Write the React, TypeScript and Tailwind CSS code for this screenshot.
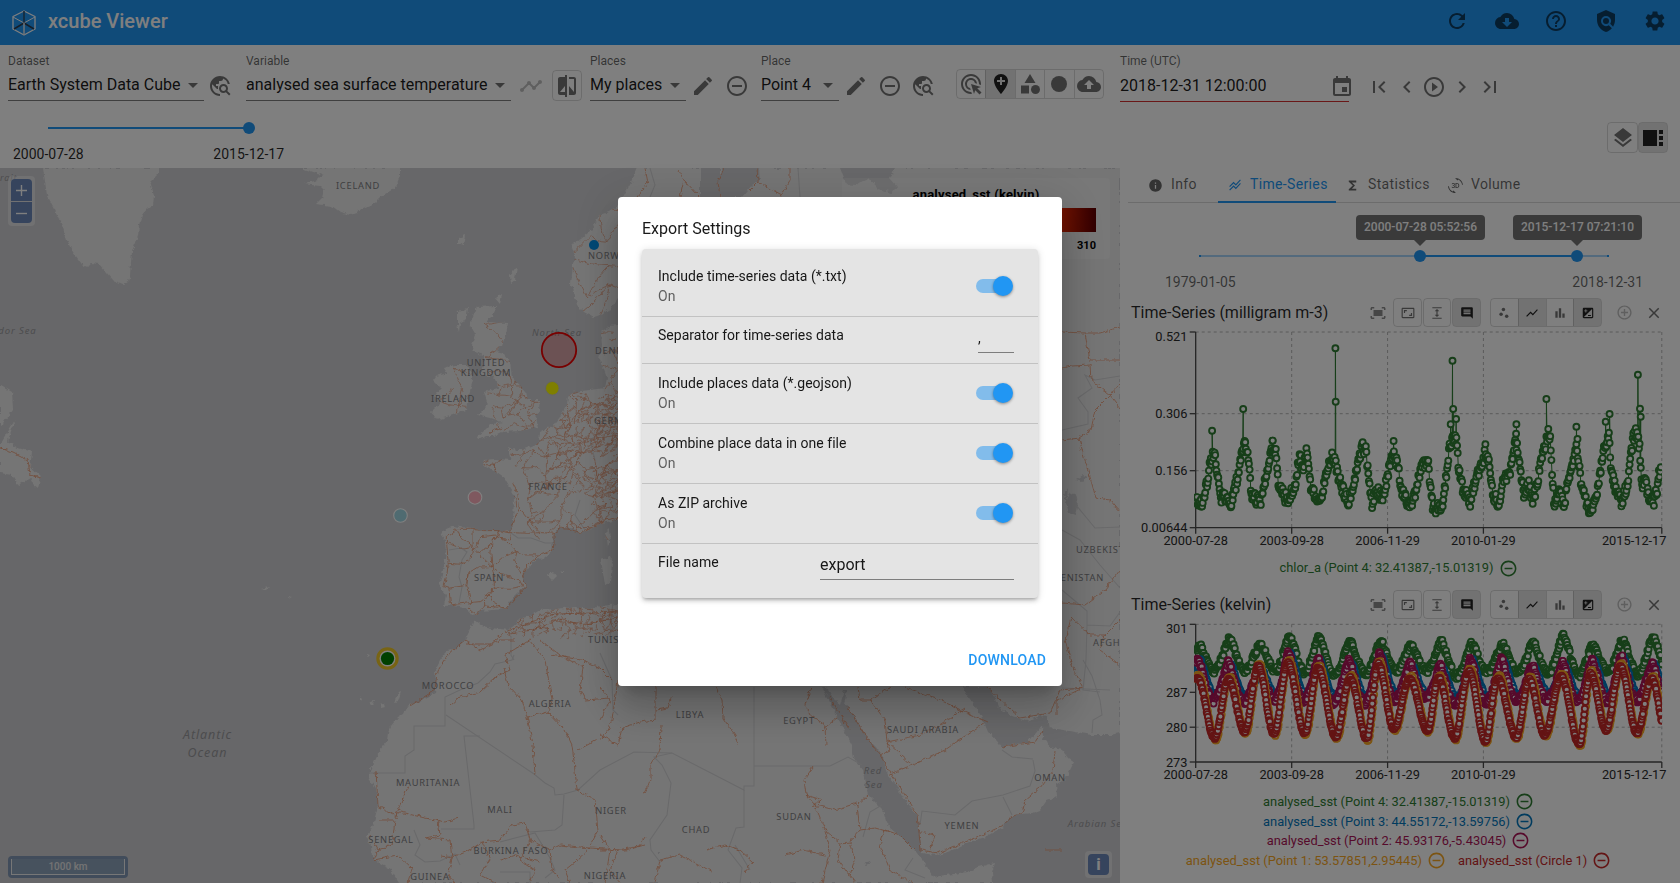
import React from "react";
import type { IconType } from "react-icons";
import {
  Md3dRotation, MdAddCircleOutline, MdAddLocation, MdAdsClick, MdArrowDropDown, MdAspectRatio, MdBarChart,
  MdCategory, MdChevronLeft, MdChevronRight, MdClose, MdCloudDownload, MdCloudUpload, MdComment, MdCompare,
  MdEdit, MdEvent, MdExpand, MdFiberManualRecord, MdFirstPage, MdFitScreen, MdFunctions, MdHelpOutline,
  MdInfo, MdIso, MdLastPage, MdLayers, MdPlayCircleOutline, MdPolicy, MdRefresh, MdRemoveCircleOutline,
  MdScatterPlot, MdSettings, MdShowChart, MdStackedLineChart, MdTimeline, MdTravelExplore, MdViewSidebar,
} from "react-icons/md";

/* ---------- helpers ---------- */

function makeRandom(seed: number) {
  let s = seed;
  return () => {
    s = (s * 1664525 + 1013904223) % 4294967296;
    return s / 4294967296;
  };
}

type Pt = [number, number];

function interpolate(anchors: Pt[], x: number) {
  for (let i = 1; i < anchors.length; i++) {
    if (x <= anchors[i][0]) {
      const [x0, y0] = anchors[i - 1];
      const [x1, y1] = anchors[i];
      return y0 + ((y1 - y0) * (x - x0)) / (x1 - x0);
    }
  }
  return anchors[anchors.length - 1][1];
}

/* Cosine easing between alternating lows and peaks; power < 1 widens the lows. */
function interpolateWave(anchors: Pt[], x: number, power: number) {
  for (let i = 1; i < anchors.length; i++) {
    if (x <= anchors[i][0]) {
      const [x0, y0] = anchors[i - 1];
      const [x1, y1] = anchors[i];
      const rising = y1 < y0;
      const t = (x - x0) / (x1 - x0);
      const fromPeak = (1 - Math.cos(Math.PI * (rising ? 1 - t : t))) / 2;
      const peak = rising ? y1 : y0;
      const low = rising ? y0 : y1;
      return peak + (low - peak) * Math.pow(fromPeak, power);
    }
  }
  return anchors[anchors.length - 1][1];
}

/* ---------- header ---------- */

function Logo() {
  return (
    <svg width="26" height="28" viewBox="0 0 26 28" fill="none" strokeLinejoin="round">
      <path d="M13 2 24 7.5V20L13 26 2 20V7.5Z" stroke="#fff" strokeWidth="1.3" />
      <path d="M2 8 13 14 24 8" stroke="#fff" strokeWidth="1" />
      <path d="M13 2V13" stroke="#2b5070" strokeWidth="1.6" />
      <path d="M13 14 3 20M13 14 23 20" stroke="#2b3c50" strokeWidth="1.5" />
      <path d="M13 14V26" stroke="#dfe6ee" strokeWidth="1.5" />
    </svg>
  );
}

function Header() {
  return (
    <header className="flex h-[45px] items-center bg-[#2196f3] pl-[11px] pr-[13px]">
      <Logo />
      <h1 className="ml-[11px] -mt-[3px] text-[20px] font-medium leading-6 text-white">xcube Viewer</h1>
      <div className="-mt-[3px] ml-auto flex gap-[25.5px] text-black/60">
        <MdRefresh size={24} />
        <MdCloudDownload size={24} />
        <MdHelpOutline size={24} />
        <MdPolicy size={24} />
        <MdSettings size={24} />
      </div>
    </header>
  );
}

/* ---------- toolbar ---------- */

function Field({ label, value, className }: { label: string; value: string; className: string }) {
  return (
    <div className={"flex shrink-0 flex-col pt-2 " + className}>
      <span className="text-[12px] leading-4 text-black/60">{label}</span>
      <div className="flex h-8 items-center justify-between whitespace-nowrap border-b border-black/50 text-[16px] leading-6 text-black/90">
        <span>{value}</span>
        <MdArrowDropDown size={24} className="-mr-[1px] mt-[1px] text-black/55" />
      </div>
    </div>
  );
}

function ToggleGroup({ icons, active, className, size, cell }: { icons: IconType[]; active: number[]; className: string; size: number; cell: string }) {
  return (
    <div className={"flex shrink-0 overflow-hidden rounded border border-black/15 " + className}>
      {icons.map((Icon, i) => (
        <div
          key={i}
          className={
            "flex items-center justify-center " + cell + (i > 0 ? " border-l border-black/15 " : " ") +
            (active.includes(i) ? "bg-black/10 text-black/85" : "text-black/55")
          }
        >
          <Icon size={size} />
        </div>
      ))}
    </div>
  );
}

function Toolbar() {
  return (
    <div className="h-[123px] bg-white">
      <div className="flex h-[76px] items-start pl-2 text-black/55">
        <Field label="Dataset" value="Earth System Data Cube" className="w-[196px]" />
        <MdTravelExplore size={24} className="ml-[4px] mt-[29px] shrink-0" />
        <Field label="Variable" value="analysed sea surface temperature" className="ml-[14px] w-[265px]" />
        <MdTimeline size={24} className="ml-2 mt-[29px] shrink-0 text-black/25" />
        <ToggleGroup icons={[MdCompare]} active={[]} size={24} cell="w-[29px]" className="ml-[9px] mt-[25px] h-[31px] w-[30px]" />
        <Field label="Places" value="My places" className="ml-2 w-24" />
        <MdEdit size={24} className="ml-[5px] mt-[29px] shrink-0" />
        <MdRemoveCircleOutline size={24} className="ml-[10px] mt-[29px] shrink-0" />
        <Field label="Place" value="Point 4" className="ml-3 w-[78px]" />
        <MdEdit size={24} className="ml-[5px] mt-[29px] shrink-0" />
        <MdRemoveCircleOutline size={24} className="ml-[10px] mt-[29px] shrink-0" />
        <MdTravelExplore size={24} className="ml-[9px] mt-[29px] shrink-0" />
        <ToggleGroup
          icons={[MdAdsClick, MdAddLocation, MdCategory, MdFiberManualRecord, MdCloudUpload]}
          active={[1]}
          size={24}
          cell="flex-1"
          className="ml-[21px] mt-6 h-[30px] w-[148px]"
        />
        <div className="ml-4 flex w-[229px] shrink-0 flex-col pt-2">
          <span className="text-[12px] leading-4 text-black/60">Time (UTC)</span>
          <div className="flex h-[33px] items-center justify-between whitespace-nowrap border-b border-[#d32f2f] text-[16px] leading-6 text-black/90">
            <span className="mt-px">2018-12-31 12:00:00</span>
            <MdEvent size={24} className="-mr-[5px] mt-[3px] text-black/55" />
          </div>
        </div>
        <div className="ml-[18px] mt-[30px] flex gap-[3.7px]">
          <MdFirstPage size={24} />
          <MdChevronLeft size={24} />
          <MdPlayCircleOutline size={24} />
          <MdChevronRight size={24} />
          <MdLastPage size={24} />
        </div>
      </div>
      <div className="flex h-[47px] items-start justify-between pr-3">
        <div className="ml-[13px] w-[271px] pt-px">
          <div className="mx-[35px] flex h-3 items-center">
            <div className="h-[2px] flex-1 bg-[#2196f3]" />
            <div className="-ml-[6px] -mr-[6px] h-3 w-3 rounded-full bg-[#2196f3]" />
          </div>
          <div className="mt-[10px] flex justify-between text-[14px] leading-5 text-black/85">
            <span>2000-07-28</span>
            <span>2015-12-17</span>
          </div>
        </div>
        <div className="mt-px flex">
          <ToggleGroup icons={[MdLayers]} active={[]} size={24} cell="flex-1" className="h-[31px] w-[31px]" />
          <ToggleGroup icons={[MdViewSidebar]} active={[0]} size={24} cell="flex-1" className="h-[31px] w-[30px]" />
        </div>
      </div>
    </div>
  );
}

/* ---------- map ---------- */

const LAND = [
  "M43 168L47 195L55 210L63 228L68 243L73 252L84 267L91 263L99 264L106 272L113 280L123 284L128 281L130 275L131 262L132 252L138 235L139 225L142 215L147 209L153 205L154 196L150 182L159 173L159 168Z",
  "M301 168L323 175L318 180L304 184L320 186L324 190L322 198L316 204L332 206L340 212L351 215L357 213L360 209L372 205L380 197L395 188L400 176L400 168Z",
  "M0 385L12 392L13 410L4 422L0 425ZM15 420L11 431L8 442L18 448L32 452L30 467L41 477L38 488L33 484L30 478L18 485L12 475L0 473L0 445Z",
  "M477 307L497 306L493 315L486 322L508 323L506 334L502 345L496 352L504 354L510 362L512 378L519 384L526 392L528 400L540 400L539 410L536 418L538 427L520 431L502 432L494 436L486 436L478 440L477 437L484 431L490 425L502 422L490 418L478 415L488 405L484 392L498 388L496 378L490 376L480 375L484 366L484 355L474 352L472 345L476 335L470 325Z",
  "M455 365L468 365L473 380L468 398L466 410L450 416L437 420L431 412L441 402L434 397L441 388L433 380L436 376L447 373L444 368Z",
  "M458 312L468 308L466 320L458 325ZM457 325L460 322L459 332ZM458 238L466 235L464 245L458 243ZM510 275L517 266L515 280L511 283ZM495 298L502 293L500 304Z",
  "M637 168L631 182L618 205L609 212L599 215L596 222L589 232L580 240L571 245L575 256L573 265L571 285L575 296L577 305L584 312L593 317L602 314L611 308L618 298L700 260L700 168Z",
  "M720 168H1120V883H399L391 870L380 864L372 856L371 846L366 836L368 833L373 825L378 806L376 790L369 778L369 773L374 763L380 750L387 741L388 733L391 726L398 717L403 714L407 706L418 702L435 693L436 683L435 670L440 660L447 650L458 648L465 640L470 630L474 620L482 626L492 628L508 630L515 625L519 619L530 616L540 610L554 609L575 607L590 609L601 606L618 604L700 640L680 400L720 197Z",
  "M601 332L610 326L618 325L700 320V520H618L601 523L592 529L581 533L570 527L556 530L552 540L553 551L545 557L534 561L528 568L522 576L526 586L518 593L510 601L506 609L493 610L480 611L476 615L472 616L466 608L455 605L444 606L446 595L439 586L443 570L446 553L445 540L441 535L444 530L453 526L474 529L495 531L510 531L513 525L514 495L504 478L494 471L486 467L483 464L484 460L495 459L512 460L508 447L515 450L522 450L534 445L539 442L540 432L554 425L560 417L567 405L568 397L573 392L590 390L605 388L607 378L604 370L599 358L602 345Z",
  "M608 537m-3 -4l4 -4l1 14l-3 4ZM601 560l9 -3l3 8l-2 18l-6 2ZM547 575l6 -3l3 4l-4 4ZM560 572l4 -1v3ZM361 696l2 5l-2 1ZM369 702l5 -2l-1 6ZM380 704l3 -1l1 4l-4 1ZM394 702l5 -9l2 -1l-3 9ZM260 589l9 -2l-3 3ZM288 597l5 1l-4 1ZM366 654l5 1l-2 2ZM291 813l4 2ZM273 587l2 2ZM300 834l2 2Z",
];

const WATER = [
  "M722 168L719 182L716 190L722 197H742L752 185L760 180L759 168Z",
  "M840 168H895L890 178L897 186L892 193L878 189L868 178L856 185L846 184Z",
  "M822 687L833 708L843 728L852 745L852 752L853 757L863 770L865 785L868 795L876 803L883 810L886 820L890 828L908 843L923 860L933 877L967 872L978 867L995 863L992 872L993 883H1120V733L1110 735L1092 735L1070 731L1050 728L1047 717L1040 716L1027 721L1012 716L998 707L994 695L988 687L963 687L967 695L976 707L983 720L988 732L997 740L1002 747L1015 744L1028 743L1036 733L1042 725L1043 737L1050 747L1062 750L1068 758L1074 762L1069 772L1065 780L1056 785L1057 795L1055 797L1047 800L1045 803L1040 810L1032 813L1022 814L1012 817L1005 822L1003 827L985 837L970 842L955 849L938 855L928 854L922 853L920 838L917 817L910 806L903 797L897 786L887 775L883 757L876 747L867 738L858 722L848 707L844 705L847 690L844 690L840 705L836 702L826 687Z",
  "M1070 492l6 3l2 8l-3 12l-6 -2l-3 -10ZM1076 480l7 -5l5 2l-6 5ZM1063 495l5 -8l-1 14Z",
  "M864 862l5 -2l1 4l-4 2ZM656 851l4 0l-1 4Z",
];

const BORDERS = [
  "M369 773H405V756L414 750V726H445V697L460 690L478 683L490 672L495 664L512 660L514 655",
  "M511 636L511 655L514 660M446 715L534 774L545 783L554 788L555 795L564 794L578 790L600 770L634 752L672 753L744 790V786H754V767V687",
  "M480 736L464 736L474 825L474 829H441M564 795L562 825L555 830L530 832M754 766H830M672 753L654 757L662 765L671 783L667 815L650 840L651 850L660 862",
  "M744 790V827L736 828L728 850L742 868L740 883M600 653L612 680L613 710L618 715M830 766L848 757L862 765",
  "M414 830L420 845L415 855L425 862L440 861L455 854L460 865M500 842L515 838L535 833L550 858L555 870L545 878M500 872H530V883",
  "M920 825L922 811L955 815L972 801L1003 795L1030 786L1035 771L1033 760M1003 797L1012 815M1002 750L1012 757L1033 759",
  "M1062 688L1110 690M1083 660L1092 676L1100 700L1102 715L1093 720L1092 733",
  "M1062 430L1088 424L1088 412L1078 398L1092 388L1085 375L1095 380L1120 376M1076 505L1095 528L1120 527M1062 530L1080 540L1100 565L1120 588M1062 590L1087 611L1087 625L1110 626L1120 612M1087 625L1086 660L1083 690L1100 692",
  "M863 837L870 812L882 805M913 858L905 870L925 878M511 533L518 538L531 538L545 543L553 543M449 550L461 548L467 552L462 560L459 577L462 587L459 603M613 600L610 640M650 168L655 185L650 197M798 168L800 197",
  "M604 430L590 440L595 460M580 500L575 515L585 530M735 845L750 870",
];

const ROADS = [
  "M410 706L435 690L437 672L448 655L466 640L480 650L500 640L515 640",
  "M466 644L490 644L505 632L530 622L556 614L590 613L618 612M511 634L540 628L560 618L580 625L618 618",
  "M451 705L460 697L480 692L497 676L510 670L505 655L530 640L545 660L552 700L548 712L527 717L522 700L508 685L504 668",
  "M550 655L582 660L600 668L612 680M548 712L565 730L572 745L575 770L577 790L595 800L598 830L590 845M577 750L590 743L605 735L612 720L618 680M527 717L533 745L535 775",
  "M584 660L580 690L585 700L610 698M540 640L560 655L584 667",
  "M376 770L378 806L395 815L400 812L425 818L445 822L458 818M378 820L395 820L392 845L378 850M395 818L408 786",
  "M438 820L440 835L425 838L450 840L452 858L440 856M370 835L378 850L374 860L398 855L412 868L408 883",
  "M452 858L470 850L482 842L500 840L512 825L525 823L530 840L550 850L560 845L590 848L618 850L640 846L645 838",
  "M482 842L490 860L480 875L495 883M530 840L520 860L535 870L530 883M590 848L575 862L565 870L570 883M618 850L610 870L620 883",
  "M452 858L448 875L455 883M500 860L515 855L540 862M550 850L552 870L560 880",
  "M656 687V720L640 722L622 728L618 745L600 735M656 710L668 708L672 695M661 725L660 750L651 765L651 780L643 795",
  "M716 687L722 700L723 718L735 735L738 745M811 687L805 705L810 715L825 725L826 746M822 730L838 717M830 697L836 708L850 730",
  "M905 687L940 700L965 712L988 722M858 687L860 700L870 700L890 687M870 700L885 720L887 742L912 765L945 750L985 722M887 742L920 735L940 725L965 708",
  "M848 707L867 738L880 755L890 772L905 795L917 815L921 850L938 853L970 840L1003 825L1012 817L1022 813L1025 800L1040 788L1053 770L1055 752",
  "M988 687L1000 700L1020 718L1050 713L1060 690L1085 688M1002 747L1035 742L1043 730M887 775L895 772L912 765M880 755L890 750L887 742",
  "M813 767L804 780L806 795L815 805L825 830L840 843L850 842L860 830L857 805L868 795M806 795L822 800L812 806M815 805L835 810L857 803M850 842L855 860L850 875",
  "M825 830L830 850L822 883M840 843L838 860L855 883M885 830L900 835L915 850M885 830L880 845L890 870L912 883M860 830L875 828L890 832M786 855L803 850L825 855",
  "M706 850L725 845L740 850L753 862L745 872M600 850L625 850L645 845M660 860L680 855L700 865L712 872M660 860L655 883M600 835L610 850L605 883",
  "M921 832L935 835L930 850M600 687L610 700L600 720M1062 332L1085 333L1100 333L1120 327M1085 333L1087 345L1090 360L1120 360M1062 368L1072 366L1090 365L1091 380L1110 395L1120 384M1110 395L1120 408M1110 395L1095 410L1091 430L1079 438L1062 440M1079 438L1085 460L1096 498L1110 500L1120 512",
  "M1062 603L1085 605L1105 590L1120 570M1071 617L1065 640L1072 665L1083 688L1057 700L1057 715M1071 617L1090 635L1105 635L1120 620M1105 635L1100 650L1120 665",
  "M637 197L648 183L645 168M678 170L684 180L680 197M684 180L700 197M724 168L718 182L720 197M750 190L758 182L757 168M758 182L782 195L790 180V168",
  "M0 448L12 452L28 460L30 475L41 478M1062 850L1045 850",
];

/* Iberian road net on a local grid of three units per pixel, origin (380, 480). */
const IBERIA =
  "M197 170L215 158L228 148L270 148L310 152L350 152L385 158L400 120L415 85L410 40L395 10" +
  "M197 170L200 210L203 250L198 290L190 320L205 325L258 316L262 280L290 262L333 260" +
  "M203 250L240 253L270 240L277 200L277 150M230 150L240 175L260 185L277 200L295 222L333 260" +
  "M295 222L333 188L350 165L352 152M333 188L330 220L333 260L365 232L408 215L430 225L475 225" +
  "M333 260L365 285L415 300L425 320M333 260L340 290L340 325L325 345L335 365L370 385" +
  "M262 280L258 316L270 368L262 385L285 405L312 378L310 350L340 325L390 325L420 320" +
  "M205 325L210 375L270 368M310 378L350 382L375 385L400 360L420 335L435 320L425 290L440 255L475 225L515 210L518 190L518 160L540 145L570 150L600 158L640 140L670 120L714 112" +
  "M333 188L345 170L380 185L408 215L400 245L425 290M203 190L240 205L277 200M270 368L300 365L325 345" +
  "M352 152L360 175L385 180L388 160M285 200L300 170L350 165M385 158L440 160L478 158L520 160M420 90L450 125L478 158";

const NETWORKS: { x: number; y: number; w: number; h: number; step: number; seed: number }[] = [
  { x: 485, y: 440, w: 130, h: 92, step: 14, seed: 5 },
  { x: 545, y: 395, w: 75, h: 90, step: 10, seed: 31 },
  { x: 562, y: 395, w: 58, h: 50, step: 6.5, seed: 11 },
  { x: 595, y: 470, w: 25, h: 60, step: 7, seed: 37 },
  { x: 490, y: 375, w: 50, h: 55, step: 10, seed: 9 },
  { x: 488, y: 325, w: 22, h: 50, step: 18, seed: 13 },
  { x: 442, y: 372, w: 25, h: 44, step: 17, seed: 15 },
  { x: 575, y: 215, w: 45, h: 95, step: 26, seed: 17 },
  { x: 510, y: 608, w: 110, h: 24, step: 7, seed: 19 },
  { x: 600, y: 330, w: 20, h: 60, step: 12, seed: 29 },
];

function networkPath({ x, y, w, h, step, seed }: (typeof NETWORKS)[number]) {
  const rnd = makeRandom(seed);
  const cols = Math.ceil(w / step);
  const rows = Math.ceil(h / step);
  const grid: Pt[][] = [];
  for (let r = 0; r <= rows; r++) {
    grid.push([]);
    for (let c = 0; c <= cols; c++) {
      grid[r].push([x + (c + (r % 2) * 0.5 + (rnd() - 0.5) * 0.8) * step, y + (r + (rnd() - 0.5) * 0.8) * step]);
    }
  }
  let d = "";
  const link = (a: Pt, b: Pt) => {
    const mx = (a[0] + b[0]) / 2 + (rnd() - 0.5) * step * 0.4;
    const my = (a[1] + b[1]) / 2 + (rnd() - 0.5) * step * 0.4;
    d += `M${a[0].toFixed(1)} ${a[1].toFixed(1)}Q${mx.toFixed(1)} ${my.toFixed(1)} ${b[0].toFixed(1)} ${b[1].toFixed(1)}`;
  };
  for (let r = 0; r < rows; r++) {
    for (let c = 0; c < cols; c++) {
      if (rnd() < 0.6) link(grid[r][c], grid[r][c + 1]);
      if (rnd() < 0.6) link(grid[r][c], grid[r + 1][c]);
      if (rnd() < 0.35) link(grid[r][c + 1], grid[r + 1][c]);
    }
  }
  return d;
}

const COUNTRIES: [string, number, number, ("start" | "end")?][] = [
  ["ICELAND", 358, 189], ["NORWAY", 588, 259, "start"], ["UNITED", 486, 366], ["KINGDOM", 486, 376],
  ["IRELAND", 453, 402], ["FRANCE", 548, 489.5], ["GERMANY", 594, 424, "start"], ["DENMARK", 595, 354, "start"],
  ["SPAIN", 489, 580.5], ["MOROCCO", 448, 689], ["ALGERIA", 550, 707], ["TUNISIA", 588, 643, "start"],
  ["MAURITANIA", 428, 786], ["MALI", 500, 813], ["SENEGAL", 391, 843], ["BURKINA FASO", 511, 854],
  ["GUINEA", 430, 880], ["NIGERIA", 605, 879], ["NIGER", 611, 814], ["LIBYA", 690, 717.5], ["EGYPT", 799, 724],
  ["CHAD", 696, 833], ["SUDAN", 794, 820], ["SAUDI ARABIA", 923, 733], ["YEMEN", 962, 829], ["OMAN", 1050, 780.5],
  ["UZBEKISTAN", 1076, 553, "start"], ["TURKMENISTAN", 1104, 581, "end"], ["AFGHANISTAN", 1093, 646, "start"],
];

const SEAS: [string, number, number, number][] = [
  ["Atlantic", 207.5, 738.5, 12.5], ["Ocean", 207.5, 756.5, 12.5], ["North Sea", 557, 335.5, 9.5], ["Labrador Sea", 3, 333.5, 9.5],
  ["Strait", 4, 180.5, 9], ["Red", 873, 774, 9.5], ["Sea", 874, 788, 9.5], ["Arabian Sea", 1098, 826.5, 9.5],
];

function MapView() {
  return (
    <div className="relative h-[715px] w-[1120px] shrink-0 overflow-hidden bg-[#cfcfd2]">
      <svg width="1120" height="715" viewBox="0 168 1120 715" className="block">
        <defs>
          <clipPath id="land">
            {LAND.map((d) => <path key={d} d={d} />)}
          </clipPath>
          <filter id="coast" filterUnits="userSpaceOnUse" x="0" y="168" width="1120" height="715">
            <feTurbulence type="fractalNoise" baseFrequency="0.22" numOctaves="2" seed="4" />
            <feDisplacementMap in="SourceGraphic" scale="5" xChannelSelector="R" yChannelSelector="G" />
          </filter>
        </defs>
        <g filter="url(#coast)">
          {LAND.map((d) => <path key={d} d={d} fill="#ebebeb" />)}
          {WATER.map((d) => <path key={d} d={d} fill="#cfcfd2" />)}
        </g>
        <g fill="none" stroke="#d3d3d5" strokeWidth="1.1">
          {BORDERS.map((d) => <path key={d} d={d} />)}
        </g>
        <g filter="url(#coast)" fill="none" stroke="#e8946c" strokeWidth="0.85" opacity="0.9" strokeLinejoin="round">
          {ROADS.map((d) => <path key={d} d={d} />)}
          <path d={IBERIA} transform="translate(380 480) scale(0.336 0.333)" strokeWidth="2.5" />
        </g>
        <g clipPath="url(#land)">
          <g filter="url(#coast)" fill="none" stroke="#e2926e" strokeWidth="0.75" opacity="0.85">
            {NETWORKS.map((n) => <path key={n.seed} d={networkPath(n)} />)}
          </g>
        </g>
        <g fontFamily="'Noto Sans', 'Open Sans', sans-serif" fontSize="9.3" letterSpacing="0.75" fill="#7f7f83">
          {COUNTRIES.map(([name, x, y, anchor]) => (
            <text key={name} x={x} y={y} textAnchor={anchor ?? "middle"}>{name}</text>
          ))}
        </g>
        <g fontFamily="'Noto Sans', 'Open Sans', sans-serif" fontStyle="italic" letterSpacing="0.9" fill="#99999d" textAnchor="middle">
          {SEAS.map(([name, x, y, size]) => (
            <text key={name} x={x} y={y} fontSize={size}>{name}</text>
          ))}
        </g>
        <circle cx="594" cy="245" r="5" fill="#0091ea" />
        <circle cx="559" cy="350" r="17.2" fill="#ff0000" fillOpacity="0.2" stroke="#f00000" strokeWidth="1.8" />
        <circle cx="552.3" cy="388.3" r="6.8" fill="#ffff00" stroke="#c8c8c8" strokeWidth="1" />
        <circle cx="475" cy="497.4" r="6.8" fill="#ffb0be" stroke="#fff" strokeWidth="1.1" />
        <circle cx="400.5" cy="515.5" r="6.8" fill="#9ed6e2" stroke="#fff" strokeWidth="1.1" />
        <circle cx="387.5" cy="658.5" r="9.6" fill="#fff" stroke="#f0c828" strokeWidth="3.2" />
        <circle cx="387.5" cy="658.5" r="6.6" fill="#008000" />
      </svg>

      <div className="absolute left-2 top-2 flex w-[27px] flex-col gap-px rounded bg-white/40 p-[3px] text-white">
        <div className="flex h-[22px] items-center justify-center rounded-t-sm bg-[#6c88ba] pt-px">
          <svg width="11" height="11" viewBox="0 0 11 11" stroke="currentColor" strokeWidth="1.4"><path d="M5.5 0V11M0 5.5H11" /></svg>
        </div>
        <div className="flex h-[21px] items-center justify-center rounded-b-sm bg-[#6c88ba] pt-px">
          <svg width="11" height="11" viewBox="0 0 11 11" stroke="currentColor" strokeWidth="1.4"><path d="M0 5.5H11" /></svg>
        </div>
      </div>

      <div className="absolute bottom-[5px] left-2 rounded bg-[#8298b6] p-[3px]">
        <div className="flex h-4 w-[114px] items-center justify-center border border-t-0 border-[#eee] bg-[#8ea4bd] text-[10px] font-medium text-[#e8e8e8]">1000 km</div>
      </div>

      <div className="absolute bottom-[5px] right-2 rounded bg-white/40 p-[3px]">
        <div className="flex h-[21px] w-[21px] items-center justify-center rounded-sm bg-[#6c88ba] text-[17px] font-bold leading-none text-white">i</div>
      </div>

      <div className="absolute right-[10px] top-[10px] h-[81px] w-[268px] rounded bg-white/25 px-[14px] pt-[9px] font-bold text-black">
        <div className="text-center text-[13px] leading-4 tracking-[0.2px]">analysed_sst (kelvin)</div>
        <div className="mt-[5px] h-6 bg-linear-to-r from-[#f0a030] via-[#f02800] via-85% to-[#600000]" />
        <div className="mt-[6px] text-right text-[11px] leading-4">310</div>
      </div>
    </div>
  );
}

/* ---------- charts ---------- */

const PLOT_LEFT = 1195.7;
const PLOT_RIGHT = 1661.8;
const X_TICKS: [number, string, number][] = [
  [1195.7, "2000-07-28", 1195.7], [1291.7, "2003-09-28", 1291.7], [1387.6, "2006-11-29", 1387.6],
  [1483.4, "2010-01-29", 1483.4], [1661.8, "2015-12-17", 1634.2],
];

function Frame({ top, bottom, yTicks, grid, children }: { top: number; bottom: number; yTicks: [number, string][]; grid: number[]; children: React.ReactNode }) {
  return (
    <>
      <g stroke="#b4b4b4" strokeWidth="1" strokeDasharray="3 3">
        <path d={`M${PLOT_LEFT} ${top}H${PLOT_RIGHT}`} />
        {grid.map((y) => <path key={y} d={`M${PLOT_LEFT} ${y}H${PLOT_RIGHT}`} />)}
        {X_TICKS.slice(1).map(([x]) => <path key={x} d={`M${x} ${top}V${bottom}`} />)}
      </g>
      <g stroke="#4a4a4a" strokeWidth="1.3">
        <path d={`M${PLOT_LEFT} ${top}V${bottom}H${PLOT_RIGHT}`} fill="none" />
        {yTicks.map(([y]) => <path key={y} d={`M${PLOT_LEFT - 6} ${y}H${PLOT_LEFT}`} />)}
        {X_TICKS.map(([x]) => <path key={x} d={`M${x} ${bottom}V${bottom + 6}`} />)}
      </g>
      {children}
      <g fontSize="12.8" fill="#2c2c2c" fontFamily="Roboto, sans-serif">
        {yTicks.map(([y, label], i) => (
          <text key={label} x="1187.5" y={i === 0 ? top + 9 : y + 4.5} textAnchor="end">{label}</text>
        ))}
        {X_TICKS.map(([x, label, at]) => <text key={x} x={at} y={bottom + 17.3} textAnchor="middle">{label}</text>)}
      </g>
    </>
  );
}

function Series({ points, color }: { points: Pt[]; color: string }) {
  return (
    <g stroke={color} fill="#fff" strokeWidth="1.9">
      <path d={"M" + points.map((p) => `${p[0].toFixed(1)} ${p[1].toFixed(1)}`).join("L")} fill="none" strokeWidth="1" />
      {points.map((p, i) => <circle key={i} cx={p[0].toFixed(1)} cy={p[1].toFixed(1)} r="3" />)}
    </g>
  );
}

/* Anchors are expressed on a grid of 2.8 x 3 units per pixel. */
const CHLOR: Pt[] = [
  [212, 625], [222, 655], [240, 600], [252, 520], [262, 490], [270, 530], [283, 620], [300, 625], [306, 655], [325, 580], [335, 530], [347, 460],
  [358, 480], [366, 600], [375, 625], [395, 630], [410, 560], [427, 460], [435, 480], [443, 570], [455, 610], [472, 635], [490, 580], [503, 500],
  [513, 540], [522, 490], [535, 590], [545, 610], [560, 645], [575, 560], [592, 495], [605, 530], [620, 590], [640, 635], [655, 575], [678, 470],
  [688, 480], [697, 570], [705, 640], [718, 600], [735, 625], [750, 560], [758, 500], [768, 500], [778, 520], [787, 590], [800, 630], [817, 650],
  [830, 600], [835, 560], [850, 520], [862, 505], [870, 600], [877, 655], [905, 645], [912, 570], [922, 480], [932, 440], [942, 450], [948, 530],
  [957, 590], [982, 635], [995, 570], [1017, 520], [1023, 480], [1035, 530], [1043, 610], [1062, 645], [1070, 575], [1090, 550], [1100, 500],
  [1108, 450], [1115, 490], [1125, 570], [1132, 615], [1145, 580], [1155, 635], [1168, 580], [1180, 490], [1190, 480], [1198, 430], [1205, 440],
  [1210, 560], [1216, 640], [1230, 600], [1243, 650], [1255, 570], [1270, 510], [1279, 460], [1285, 530], [1293, 600], [1315, 660], [1335, 620],
  [1345, 540], [1358, 460], [1369, 440], [1375, 530], [1385, 590], [1403, 635], [1420, 590], [1427, 520], [1437, 440], [1447, 430], [1455, 480],
  [1462, 590], [1470, 570], [1480, 620], [1495, 630], [1505, 590], [1516, 500],
];
const SPIKES: Pt[] = [
  [258, 422], [345, 357], [427, 452], [603, 175], [604, 335], [766, 453], [931, 212], [933, 357], [941, 387], [926, 403], [1023, 463], [1110, 403],
  [1109, 431], [1194, 327], [1278, 410], [1281, 447], [1371, 372], [1360, 395], [1450, 254], [1456, 356], [1458, 380],
];

function ChlorChart() {
  const rnd = makeRandom(42);
  const pts: Pt[] = [];
  for (let x = 214; x <= 1515; x += 1.75) {
    pts.push([x, interpolate(CHLOR, x) + (rnd() - 0.5) * 36]);
  }
  const raw = [...pts, ...SPIKES].sort((a, b) => a[0] - b[0]);
  const points = raw.map(([x, y]): Pt => [1120 + x / 2.8, 290 + y / 3]);
  return (
    <svg width="560" height="226" viewBox="1120 327 560 226" className="block shrink-0">
      <clipPath id="plotA"><rect x="1194" y="327" width="468" height="202" /></clipPath>
      <Frame top={332} bottom={527.7} grid={[413.7, 470.7]} yTicks={[[332, "0.521"], [413.7, "0.306"], [470.7, "0.156"], [527.7, "0.00644"]]}>
        <g clipPath="url(#plotA)"><Series points={points} color="#2e7d32" /></g>
      </Frame>
    </svg>
  );
}

const PEAK_X = [222, 307, 393, 475, 557, 645, 730, 815, 900, 985, 1072, 1157, 1242, 1325, 1407, 1493];
const GREEN_PEAK = [185, 165, 180, 157, 157, 175, 172, 185, 175, 180, 178, 178, 155, 182, 167, 162];
const GREEN_LOW = [268, 268, 268, 272, 280, 278, 270, 268, 285, 272, 275, 275, 282, 272, 278, 275];
const PINK_PEAK = [222, 234, 246, 202, 222, 228, 207, 238, 243, 222, 224, 243, 235, 222, 214, 234];
const PINK_LOW = [360, 362, 358, 360, 364, 366, 355, 355, 368, 364, 360, 355, 362, 360, 357, 360];
const RED_X = [218, 304, 388, 471, 555, 645, 724, 812, 893, 978, 1058, 1147, 1236, 1318, 1402, 1490];
const RED_PEAK = [285, 290, 250, 240, 255, 285, 243, 288, 285, 265, 285, 290, 280, 272, 250, 288];
const RED_LOW_X = [266, 350, 432, 518, 605, 692, 768, 862, 938, 1024, 1110, 1190, 1287, 1362, 1448, 1530];
const RED_LOW = [465, 445, 452, 450, 462, 467, 437, 443, 466, 474, 463, 455, 483, 440, 448, 450];

function wave(px: number[], peak: number[], lowX: number[], low: number[], shift: number, dPeak: number, dLow: number): Pt[] {
  const out: Pt[] = [[px[0] + shift - 42, low[0]]];
  px.forEach((x, i) => {
    out.push([x + shift, peak[i] + dPeak]);
    out.push([lowX[i] + shift, low[i] + dLow]);
  });
  return out;
}

function seasonal(anchors: Pt[], noise: number, seed: number, power: number): Pt[] {
  const rnd = makeRandom(seed);
  const out: Pt[] = [];
  for (let x = 213; x <= 1517; x += 1.75) {
    out.push([1120 + x / 2.8, 583 + (interpolateWave(anchors, x, power) + (rnd() - 0.5) * noise) / 3]);
  }
  return out;
}

function KelvinChart() {
  const lowX = PEAK_X.map((x) => x + 42);
  return (
    <svg width="560" height="171" viewBox="1120 619 560 171" className="block shrink-0">
      <clipPath id="plotB"><rect x="1194" y="619" width="468" height="145" /></clipPath>
      <Frame top={624.3} bottom={762} grid={[727.2]} yTicks={[[624.3, "301"], [692.3, "287"], [727.2, "280"], [762, "273"]]}>
        <g clipPath="url(#plotB)">
          <Series points={seasonal(wave(PEAK_X, GREEN_PEAK, lowX, GREEN_LOW, 0, 3, -6), 20, 3, 0.75)} color="#2e7d32" />
          <Series points={seasonal(wave(PEAK_X, PINK_PEAK, lowX, PINK_LOW, 2, 10, -22), 10, 7, 0.7)} color="#0277bd" />
          <Series points={seasonal(wave(PEAK_X, PINK_PEAK, lowX, PINK_LOW, -3, 3, -6), 18, 8, 0.65)} color="#ad1457" />
          <Series points={seasonal(wave(RED_X, RED_PEAK, RED_LOW_X, RED_LOW, 2, -8, 4), 8, 12, 1)} color="#f9a825" />
          <Series points={seasonal(wave(RED_X, RED_PEAK, RED_LOW_X, RED_LOW, -1, 0, 0), 8, 23, 1)} color="#c62828" />
        </g>
      </Frame>
    </svg>
  );
}

function LegendItem({ text, className }: { text: string; className: string }) {
  return (
    <span className={"flex items-center gap-[5px] " + className}>
      <span>{text}</span>
      <MdRemoveCircleOutline size={19} />
    </span>
  );
}

function ChartHeader({ title }: { title: string }) {
  return (
    <div className="flex h-[29px] shrink-0 items-center pl-[11px] text-black/55">
      <span className="w-[238px] shrink-0 text-[16px] leading-6 text-black/85">{title}</span>
      <MdFitScreen size={18} className="mr-[6px] shrink-0 text-black/45" />
      <ToggleGroup icons={[MdAspectRatio]} active={[]} size={14} cell="flex-1" className="mr-[1px] h-[29px] w-[29px]" />
      <ToggleGroup icons={[MdExpand]} active={[]} size={14} cell="flex-1" className="mr-[1px] h-[29px] w-[28px]" />
      <ToggleGroup icons={[MdComment]} active={[0]} size={14} cell="flex-1" className="mr-[9px] h-[29px] w-[29px]" />
      <ToggleGroup icons={[MdScatterPlot, MdShowChart, MdBarChart, MdIso]} active={[1, 3]} size={14} cell="flex-1" className="h-[29px] w-[112px]" />
      <MdAddCircleOutline size={17} className="ml-[14px] shrink-0 text-black/25" />
      <MdClose size={18} className="ml-[12px] shrink-0" />
    </div>
  );
}

/* ---------- sidebar ---------- */

function Tooltip({ text, className }: { text: string; className: string }) {
  return (
    <div className={"absolute top-3 flex h-[25px] w-[129px] items-center justify-center rounded-sm bg-[#757575] pb-px text-[12px] font-medium text-white " + className}>
      {text}
      <svg width="12" height="6" viewBox="0 0 12 6" className="absolute -bottom-[6px] left-[58px]"><path d="M0 0H12L6 6Z" fill="#757575" /></svg>
    </div>
  );
}

function Sidebar() {
  return (
    <aside className="flex h-[715px] w-[560px] flex-col overflow-hidden bg-white">
      <div className="ml-2 flex h-[35px] shrink-0 items-stretch border-b border-black/15 text-[14px] tracking-[0.35px] text-black/60">
        <div className="flex w-[90px] items-center pb-px pl-5"><MdInfo size={15} className="mt-px" /><span className="ml-2">Info</span></div>
        <div className="-mb-px flex w-[118px] items-center border-b-2 border-[#2196f3] pl-[10px] text-[#2196f3]"><MdStackedLineChart size={14} className="mt-px" /><span className="ml-2">Time-Series</span></div>
        <div className="flex w-[102px] items-center pb-px pl-[9px]"><MdFunctions size={15} className="mt-px" /><span className="ml-2">Statistics</span></div>
        <div className="flex items-center pb-px pl-[10px]"><Md3dRotation size={15} className="mt-px" /><span className="ml-2">Volume</span></div>
      </div>
      <div className="relative h-[95px] shrink-0">
        <div className="ml-[79px] mr-[71px] flex h-[106px] items-center">
          <div className="h-[2px] w-[2px] bg-[#2196f3]" />
          <div className="h-[2px] w-[219px] bg-[#2196f3]/40" />
          <div className="-ml-[6px] h-3 w-3 rounded-full bg-[#2196f3]" />
          <div className="-ml-[6px] h-[2px] w-[157px] bg-[#2196f3]" />
          <div className="-ml-[6px] h-3 w-3 rounded-full bg-[#2196f3]" />
          <div className="h-[2px] flex-1 bg-[#2196f3]/40" />
          <div className="h-[2px] w-[2px] bg-[#2196f3]" />
        </div>
        <div className="-mt-[37px] ml-[45px] mr-[37px] flex justify-between text-[14px] leading-5 text-black/60">
          <span>1979-01-05</span>
          <span>2018-12-31</span>
        </div>
        <Tooltip text="2000-07-28 05:52:56" className="left-[236px]" />
        <Tooltip text="2015-12-17 07:21:10" className="left-[393px]" />
      </div>
      <ChartHeader title="Time-Series (milligram m-3)" />
      <ChlorChart />
      <div className="flex h-[37px] shrink-0 justify-center pr-[3px] text-[12.86px]">
        <LegendItem text="chlor_a (Point 4: 32.41387,-15.01319)" className="-mt-[7px] text-[#2e7d32]" />
      </div>
      <ChartHeader title="Time-Series (kelvin)" />
      <KelvinChart />
      <div className="mt-[2px] flex flex-col items-center pr-[3px] text-[12.86px] leading-[19.5px]">
        <LegendItem text="analysed_sst (Point 4: 32.41387,-15.01319)" className="text-[#2e7d32]" />
        <LegendItem text="analysed_sst (Point 3: 44.55172,-13.59756)" className="text-[#0277bd]" />
        <LegendItem text="analysed_sst (Point 2: 45.93176,-5.43045)" className="text-[#ad1457]" />
        <div className="flex gap-3">
          <LegendItem text="analysed_sst (Point 1: 53.57851,2.95445)" className="text-[#f9a825]" />
          <LegendItem text="analysed_sst (Circle 1)" className="text-[#c62828]" />
        </div>
      </div>
    </aside>
  );
}

/* ---------- dialog ---------- */

function Switch() {
  return (
    <div className="flex h-[14px] w-[34px] items-center justify-end rounded-full bg-[#82bceb]">
      <div className="-mr-[3px] h-5 w-5 shrink-0 rounded-full bg-[#2196f3] shadow-[0_1px_3px_rgba(0,0,0,0.4)]" />
    </div>
  );
}

function SwitchRow({ label }: { label: string }) {
  return (
    <div className="flex h-[60px] items-center justify-between border-b border-black/15 pb-[2px] pl-4 pr-7">
      <div className="text-[14px] leading-5 tracking-[0.02px]">
        <div className="text-black/90">{label}</div>
        <div className="text-black/60">On</div>
      </div>
      <Switch />
    </div>
  );
}

function ExportDialog() {
  return (
    <div className="fixed inset-0 z-10 flex items-center justify-center bg-black/50">
      <div className="flex h-[489px] w-[444px] flex-col rounded bg-white px-6 pt-5 shadow-[0_11px_15px_-7px_rgba(0,0,0,0.2),0_24px_38px_3px_rgba(0,0,0,0.14),0_9px_46px_8px_rgba(0,0,0,0.12)]">
        <h2 className="text-[16px] leading-6 text-black/90">Export Settings</h2>
        <div className="mt-2 h-[349px] rounded bg-[#e4e4e4] pt-2 shadow-[0_3px_3px_-2px_rgba(0,0,0,0.2),0_3px_4px_0_rgba(0,0,0,0.14),0_1px_8px_0_rgba(0,0,0,0.12)]">
          <SwitchRow label="Include time-series data (*.txt)" />
          <div className="flex h-[47px] justify-between border-b border-black/15 pl-4 pr-6">
            <span className="pt-[8px] text-[14px] leading-5 tracking-[0.02px] text-black/90">Separator for time-series data</span>
            <div className="mb-[10px] mt-[7px] w-9 border-b border-black/45 text-[14px] leading-[29px] text-black/90">,</div>
          </div>
          <SwitchRow label="Include places data (*.geojson)" />
          <SwitchRow label="Combine place data in one file" />
          <SwitchRow label="As ZIP archive" />
          <div className="flex justify-between pl-4 pr-6">
            <span className="pt-2 text-[14px] leading-5 tracking-[0.02px] text-black/90">File name</span>
            <div className="mt-[6px] h-[30px] w-[194px] border-b border-black/45 text-[16px] leading-[30px] text-black/90">export</div>
          </div>
        </div>
        <button className="-mr-2 mt-[50px] self-end text-[14px] font-medium leading-6 tracking-[0.2px] text-[#2196f3]">DOWNLOAD</button>
      </div>
    </div>
  );
}

export default function App() {
  return (
    <div className="h-[883px] w-[1680px] overflow-hidden bg-white font-['Roboto',sans-serif]">
      <Header />
      <Toolbar />
      <div className="flex">
        <MapView />
        <Sidebar />
      </div>
      <ExportDialog />
    </div>
  );
}
